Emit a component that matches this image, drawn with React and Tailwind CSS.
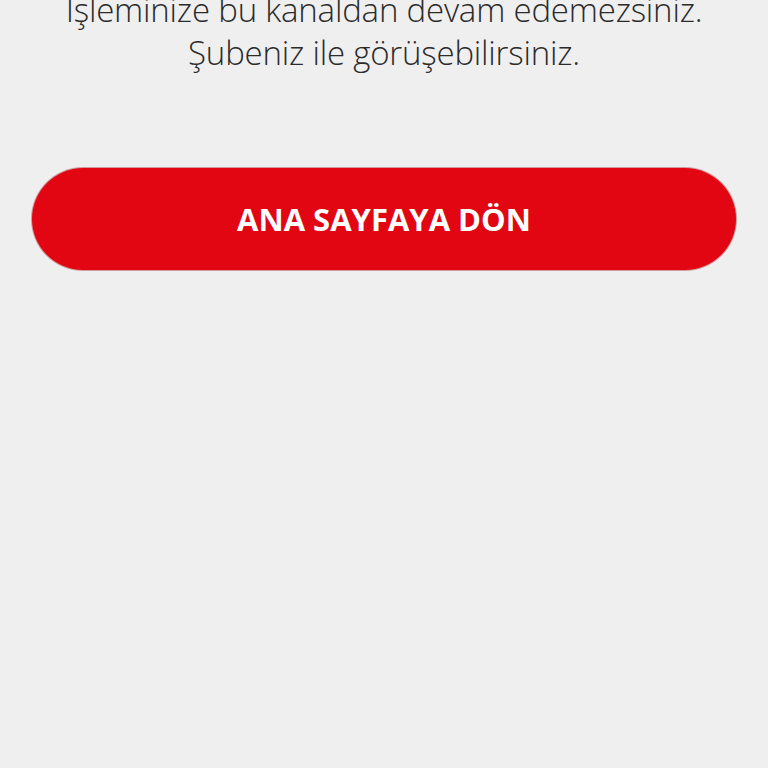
export default function App() {
  return (
    <div className="min-h-[768px] w-full bg-[#efefef] overflow-hidden" style={{ fontFamily: '"Open Sans", "Noto Sans", sans-serif' }}>
      <div className="-mt-[12px] flex flex-col items-center px-8">
        <p className="whitespace-nowrap text-center text-[33px] leading-[43px] text-[#2b2b2b] font-light tracking-[-0.2px]">
          İşleminize bu kanaldan devam edemezsiniz.
          <br />
          Şubeniz ile görüşebilirsiniz.
        </p>
        <button className="mt-[94px] h-[102px] w-full rounded-full bg-[#e20613] text-white text-[31px] font-bold shadow-[0_0_0_1px_rgba(150,0,10,0.35)]">
          ANA SAYFAYA DÖN
        </button>
      </div>
    </div>
  );
}
